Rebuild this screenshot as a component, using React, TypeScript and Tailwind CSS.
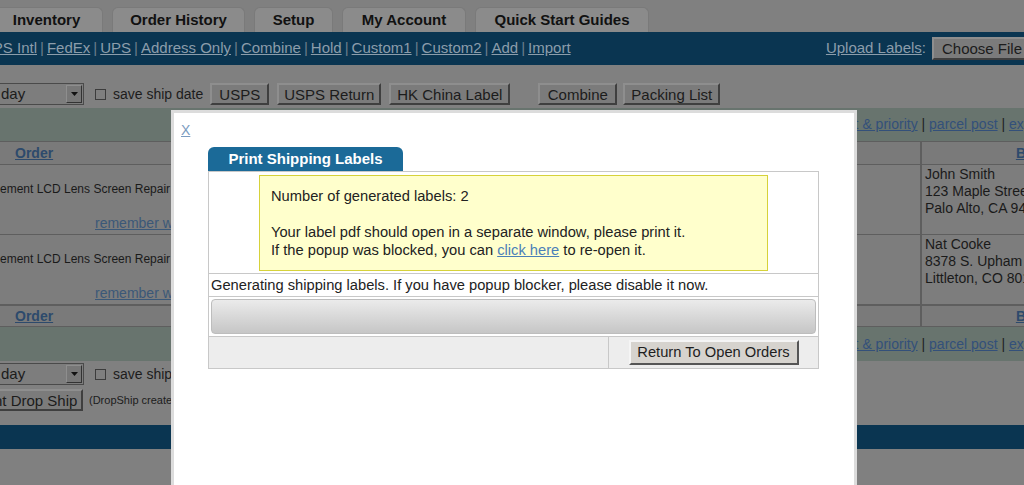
import React from 'react';

const tabs = [
    { label: 'Inventory', w: 'w-[113px]' },
    { label: 'Order History', w: 'w-[133px]' },
    { label: 'Setup', w: 'w-[79px]' },
    { label: 'My Account', w: 'w-[124px]' },
    { label: 'Quick Start Guides', w: 'w-[174px]' },
];

const carriers = ['USPS Intl', 'FedEx', 'UPS', 'Address Only', 'Combine', 'Hold', 'Custom1', 'Custom2', 'Add', 'Import'];

const DimButton = ({ children, className = '' }: { children: React.ReactNode; className?: string }) => (
    <button className={`h-[22px] bg-[#7b7b7b] text-[15px] leading-none text-[#1c1c1c] border-2 border-t-[#8e8e8e] border-l-[#8e8e8e] border-r-[#3f3f3f] border-b-[#3f3f3f] whitespace-nowrap ${className}`}>
        {children}
    </button>
);

const DaySelect = () => (
    <div className="flex items-center h-[22px] w-[94px] -ml-[10px] bg-[#7d7d7d] border border-[#4a4a4a] shrink-0">
        <span className="flex-1 pl-[10px] text-[15px] text-[#1c1c1c]">day</span>
        <span className="w-[16px] h-[18px] mr-[1px] bg-[#777] border border-t-[#8e8e8e] border-l-[#8e8e8e] border-r-[#333] border-b-[#333] flex items-center justify-center">
            <svg width="7" height="4" viewBox="0 0 7 4"><path d="M0 0h7L3.5 4z" fill="#111" /></svg>
        </span>
    </div>
);

const SaveShip = () => (
    <div className="flex items-center gap-[7px] ml-[11px] text-[14px] text-[#1c1c1c] whitespace-nowrap">
        <span className="inline-block w-[11px] h-[11px] border border-[#3c3c3c] bg-[#7f7f7f]" />
        save ship date
    </div>
);

const ServiceLinks = ({ h }: { h: string }) => (
    <div className={`flex justify-end items-center ${h} bg-[#68746e] text-[14px] text-[#33507a] whitespace-nowrap overflow-hidden`}>
        <span className="-mr-[34px]">
            <span className="underline">first &amp; priority</span> <span className="text-[#222]">|</span>{' '}
            <span className="underline">parcel post</span> <span className="text-[#222]">|</span>{' '}
            <span className="underline">express</span>
        </span>
    </div>
);

const HeaderRow = ({ h }: { h: string }) => (
    <div className={`flex ${h} bg-[#7a7a7a] border-t border-b border-[#5e5e5e]`}>
        <div className="w-[922px] border-r-2 border-[#5e5e5e] flex items-center pl-[15px]">
            <span className="font-bold underline text-[14px] text-[#2d4a6c]">Order</span>
        </div>
        <div className="flex-1 flex items-center justify-end">
            <span className="font-bold underline text-[14px] text-[#2d4a6c] -mr-[2px]">B</span>
        </div>
    </div>
);

const OrderRow = ({ lines }: { lines: string[] }) => (
    <div className="flex h-[70px] bg-[#7d7d7d] border-b border-[#5e5e5e]">
        <div className="w-[922px] border-r-2 border-[#5e5e5e] text-[#1a1a1a]">
            <div className="w-[171px] overflow-hidden whitespace-nowrap">
                <div className="pt-[17px] text-[12px] leading-[15px]">ement LCD Lens Screen Repair</div>
                <div className="pl-[95px] pt-[18px] text-[14px] leading-[16px] text-[#3b5878] underline">remember whatever</div>
            </div>
        </div>
        <div className="flex-1 pl-[3px] pt-[1px] text-[14px] leading-[17px] text-[#1a1a1a] whitespace-nowrap overflow-hidden">
            {lines.map((l) => (
                <div key={l}>{l}</div>
            ))}
        </div>
    </div>
);

const Modal = () => (
    <div className="absolute left-[171px] top-[110px] w-[686px] h-[400px] bg-white border-x-[3px] border-t-[3px] border-[#dcdcdc] text-[#222]">
        <div className="pl-[7px] pt-[10px] h-[34px] text-[14px] leading-[14px]">
            <span className="text-[#7b9cc0] underline">X</span>
        </div>
        <div className="ml-[34px] w-[611px]">
            <div className="w-[195px] h-[24px] rounded-t-[6px] bg-[#1b6a98] text-white font-bold text-[15px] flex items-center justify-center">
                Print Shipping Labels
            </div>
            <div className="border border-[#c8c8c8] text-[14.7px]">
                <div className="h-[102px] pt-[3px] pl-[50px] border-b border-[#c8c8c8]">
                    <div className="w-[509px] h-[96px] bg-[#ffffcc] border border-[#d6d23a] pl-[11px] pt-[11px] leading-[18px]">
                        <div>Number of generated labels: 2</div>
                        <div className="h-[18px]" />
                        <div>Your label pdf should open in a separate window, please print it.</div>
                        <div>
                            If the popup was blocked, you can <span className="text-[#4b7fb8] underline">click here</span> to re-open it.
                        </div>
                    </div>
                </div>
                <div className="h-[23px] pl-[2px] flex items-center border-b border-[#c8c8c8] whitespace-nowrap">
                    Generating shipping labels. If you have popup blocker, please disable it now.
                </div>
                <div className="h-[40px] p-[2px] border-b border-[#c8c8c8]">
                    <div className="h-full rounded-[4px] border border-[#bdbdbd] bg-gradient-to-b from-[#ebebeb] to-[#c6c6c6]" />
                </div>
                <div className="h-[31px] flex bg-[#ededed]">
                    <div className="w-[400px] border-r border-[#c8c8c8]" />
                    <div className="flex-1 flex items-center justify-center">
                        <button className="h-[25px] w-[170px] bg-[#d6d3ce] border-2 border-t-[#f5f5f5] border-l-[#f5f5f5] border-r-[#555] border-b-[#555] text-[14.7px] text-[#1e1e1e] leading-none whitespace-nowrap">
                            Return To Open Orders
                        </button>
                    </div>
                </div>
            </div>
        </div>
    </div>
);

export default function App() {
    return (
        <div className="relative w-[1024px] h-[485px] overflow-hidden bg-[#808080]" style={{ fontFamily: '"Liberation Sans", Arial, sans-serif' }}>
            {/* tabs */}
            <div className="flex gap-[9px] pt-[7px] -ml-[10px] h-[32px]">
                {tabs.map((t) => (
                    <div key={t.label} className={`${t.w} h-[25px] shrink-0 rounded-t-[6px] bg-[#8b8b8b] border border-b-0 border-[#7a7a7a] flex items-center justify-center font-bold text-[15px] text-[#111]`}>
                        {t.label}
                    </div>
                ))}
            </div>
            {/* carrier bar */}
            <div className="h-[33px] bg-[#0a3551] flex items-center justify-between text-[15px] text-[#8c9dab] whitespace-nowrap">
                <div className="-ml-[28px]">
                    {carriers.map((c, i) => (
                        <span key={c}>
                            {i > 0 && <span className="text-[#6c7e8c] mx-[3px]">|</span>}
                            <span className="underline">{c}</span>
                        </span>
                    ))}
                </div>
                <div className="flex items-center gap-[6px] -mr-[8px]">
                    <span><span className="underline">Upload Labels</span>:</span>
                    <DimButton className="h-[23px] w-[100px] text-left pl-[8px]">Choose File</DimButton>
                </div>
            </div>
            {/* toolbar */}
            <div className="flex items-start pt-[18px] h-[43px]">
                <DaySelect />
                <div className="h-[22px] flex items-center"><SaveShip /></div>
                <DimButton className="ml-[7px] w-[59px]">USPS</DimButton>
                <DimButton className="ml-[8px] w-[104px]">USPS Return</DimButton>
                <DimButton className="ml-[8px] w-[121px]">HK China Label</DimButton>
                <DimButton className="ml-[28px] w-[79px]">Combine</DimButton>
                <DimButton className="ml-[6px] w-[97px]">Packing List</DimButton>
            </div>
            {/* orders table */}
            <ServiceLinks h="h-[33px]" />
            <HeaderRow h="h-[24px]" />
            <OrderRow lines={['John Smith', '123 Maple Street', 'Palo Alto, CA 94301']} />
            <OrderRow lines={['Nat Cooke', '8378 S. Upham Way', 'Littleton, CO 80123']} />
            <HeaderRow h="h-[22px]" />
            <ServiceLinks h="h-[34px]" />
            {/* bottom toolbar */}
            <div className="flex items-start pt-[2px] h-[25px]">
                <DaySelect />
                <div className="h-[22px] flex items-center"><SaveShip /></div>
            </div>
            <div className="flex items-start gap-[6px] pt-[3px] h-[28px]">
                <DimButton className="-ml-[30px] w-[113px]">Print Drop Ship</DimButton>
                <span className="text-[11px] leading-[22px] text-[#1c1c1c] whitespace-nowrap">(DropShip created labels)</span>
            </div>
            <div className="mt-[11px] h-[24px] bg-[#0a3551]" />
            <Modal />
        </div>
    );
}
